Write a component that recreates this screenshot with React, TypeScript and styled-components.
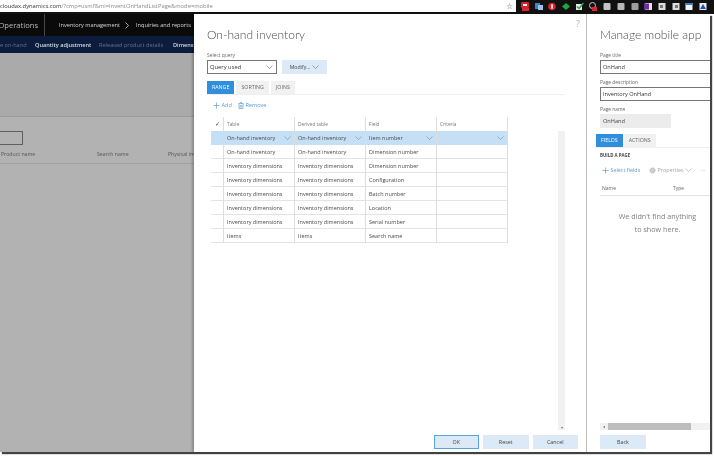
import React from "react";
import styled, { createGlobalStyle } from "styled-components";

const Global = createGlobalStyle`
  html, body { margin: 0; padding: 0; background: #fff; }
  * { box-sizing: border-box; }
  #root { width: 714px; height: 456px; overflow: hidden; font-family: "Open Sans", "Liberation Sans", sans-serif; }
`;

const Shot = styled.div`
  width: 714px; height: 456px; display: flex; flex-direction: column; background: #fff; overflow: hidden; filter: blur(0.3px);
`;
const Chrome = styled.div`
  height: 14px; flex: none; display: flex; align-items: flex-start; border-bottom: 2px solid #111; background: #fff;
`;
const Url = styled.div`
  flex: 1; height: 12px; line-height: 12px; font-size: 5.8px; white-space: nowrap; color: #333; overflow: hidden;
  span { color: #8a8a8a; }
`;
const Star = styled.div`
  width: 14px; text-align: center; font-size: 8px; line-height: 11px; color: #555;
`;
const Tray = styled.div`
  width: 198px; height: 13px; background: #111; display: flex; align-items: center; gap: 5.7px; padding-left: 5px; position: relative; z-index: 1;
`;
const TrayIcon = styled.svg`
  width: 8px; height: 9px; flex: none;
`;
const Workspace = styled.div`
  flex: 1; min-height: 0; display: flex; background: #fff;
`;
const Framed = styled.div`
  width: 710px; height: 438px; flex: none; display: flex; box-shadow: 2px 2px 1px #444;
`;
const Back = styled.div`
  width: 194px; flex: none; display: flex; flex-direction: column; background: #b2b2b2; overflow: hidden;
`;
const TopBar = styled.div`
  height: 22px; flex: none; background: #0a0a0a; color: #d8d8d8; display: flex; align-items: center; white-space: nowrap; font-size: 5.6px;
`;
const Brand = styled.div`
  width: 45px; height: 100%; flex: none; display: flex; justify-content: flex-end; font-size: 7.6px; line-height: 22px; color: #bcbcbc; border-right: 1px solid #4a4a4a; margin-right: 14px; padding-right: 6px;
`;
const CrumbSep = styled.svg`
  width: 4px; height: 7px; flex: none; margin: 0 7px 0 5px; fill: none; stroke: #d8d8d8; stroke-width: 0.8;
`;
const Nav = styled.div`
  height: 17px; flex: none; background: #0b1c3c; display: flex; align-items: center; white-space: nowrap; font-size: 5.6px; gap: 9px;
`;
const NavItem = styled.span<{ $dim?: boolean; $w: number }>`
  width: ${(p) => p.$w}px; flex: none; color: ${(p) => (p.$dim ? "#66738c" : "#d6dbe6")}; font-weight: ${(p) => (p.$dim ? 400 : 600)};
`;
const BackBody = styled.div`
  flex: 1; display: flex; flex-direction: column; padding-top: 63px; background: #aaaaaa;
`;
const Rule = styled.div`
  height: 1px; background: #9c9c9c;
`;
const BackLower = styled.div`
  flex: 1; background: #b2b2b2;
`;
const SearchBox = styled.div`
  width: 23px; height: 14px; margin-top: 14px; border: 1px solid #5f5f5f; border-left: none;
`;
const BackCols = styled.div`
  height: 19px; display: flex; align-items: center; font-size: 5.2px; color: #555; white-space: nowrap; border-bottom: 1px solid #a0a0a0;
`;
const BackCol = styled.span<{ $w: number }>`
  width: ${(p) => p.$w}px; flex: none; padding-left: 1px;
`;
const Dialog = styled.div`
  width: 393px; flex: none; background: #fff; display: flex; flex-direction: column; padding: 11px 0 0 13px; position: relative; border-right: 1px solid #bdbdbd; box-shadow: -2px 0 2px rgba(0, 0, 0, 0.22);
`;
const Help = styled.div`
  position: absolute; right: 6px; top: 3px; font-size: 9px; color: #b5b5b5;
`;
const Title = styled.h1`
  margin: 0; font-family: Lato, "Open Sans", sans-serif; font-weight: 300; font-size: 12px; line-height: 20px; color: #4d4d4d; white-space: nowrap;
`;
const Label = styled.div`
  font-size: 4.9px; line-height: 7px; color: #666;
`;
const QueryLabel = styled(Label)`
  margin-top: 7px;
`;
const QueryRow = styled.div`
  display: flex; gap: 5px; margin-top: 1px;
`;
const Select = styled.div`
  width: 70px; height: 14px; border: 1px solid #777; font-size: 5.8px; line-height: 12px; padding-left: 2px; color: #333; display: flex; justify-content: space-between; align-items: center;
`;
const Chev = styled.svg<{ $c?: string }>`
  width: 7px; height: 4px; flex: none; margin-right: 3px; fill: none; stroke: ${(p) => p.$c ?? "#666"}; stroke-width: 0.6;
`;
const Modify = styled.div`
  width: 45px; height: 14px; background: #dce9f6; font-size: 5.2px; color: #444; display: flex; align-items: center; justify-content: center; gap: 2px;
  svg { margin: 0; }
`;
const Tabs = styled.div`
  display: flex; gap: 2px; height: 14px; margin-top: 7px; width: 358px; border-bottom: 1px solid #efefef;
`;
const Tab = styled.div<{ $on?: boolean }>`
  height: 13px; padding: 0 5px; font-size: 5.3px; line-height: 13px; background: ${(p) => (p.$on ? "#2f8fdc" : "#f1f1f1")}; color: ${(p) => (p.$on ? "#fff" : "#666")};
`;
const Actions = styled.div`
  display: flex; gap: 6px; margin-top: 3.5px; padding-left: 6px; height: 13px; align-items: center; font-size: 5.6px; color: #5b9bd5;
`;
const Action = styled.div`
  display: flex; align-items: center; gap: 1.5px;
`;
const TableWrap = styled.div`
  display: grid; grid-template-columns: 13px 71px 71px 71px 71px; margin: 5.5px 0 0 4px; width: 297px;
`;
const Tick = styled.div`
  height: 14px; border-right: 1px solid #dedede; display: flex; align-items: center; justify-content: center; color: #333; font-size: 6px;
`;
const Head = styled.div`
  height: 14px; border-right: 1px solid #dedede; font-size: 4.8px; line-height: 14px; color: #777; padding-left: 3px;
`;
const Mark = styled.div<{ $on?: boolean }>`
  height: 14px; background: ${(p) => (p.$on ? "#c5dff4" : "#fff")}; border-bottom: 1px solid ${(p) => (p.$on ? "#c5dff4" : "#e3e3e3")}; border-right: 1px solid ${(p) => (p.$on ? "#c5dff4" : "#dedede")};
`;
const Cell = styled.div<{ $on?: boolean }>`
  height: 14px; background: ${(p) => (p.$on ? "#c5dff4" : "#fff")}; border-bottom: 1px solid ${(p) => (p.$on ? "#c5dff4" : "#e3e3e3")}; border-right: 1px solid #dedede; font-size: 5.5px; color: #4a4a4a; padding-left: 3px; display: flex; align-items: center; justify-content: space-between; white-space: nowrap; overflow: hidden;
`;
const Spacer = styled.div`
  flex: 1; min-height: 0;
`;
const ScrollTrack = styled.div`
  position: absolute; right: 21px; top: 117px; bottom: 22px; width: 7px; background: #f1f1f1; display: flex; align-items: flex-end; justify-content: center; font-size: 4px; color: #777;
`;
const Footer = styled.div`
  height: 17px; flex: none; display: flex; justify-content: flex-end; gap: 4px; padding-right: 8px;
`;
const Btn = styled.div<{ $primary?: boolean }>`
  width: 45.5px; height: 14px; background: #dce9f6; border: 1px solid ${(p) => (p.$primary ? "#5aa5e0" : "#dce9f6")}; font-size: 5.4px; line-height: 12px; text-align: center; color: #444;
`;
const Panel = styled.div`
  flex: 1; min-width: 0; background: #fff; display: flex; flex-direction: column; padding: 11px 0 0 13px; overflow: hidden;
`;
const PanelTitle = styled.h2`
  margin: 0; font-family: Lato, "Open Sans", sans-serif; font-weight: 300; font-size: 12px; line-height: 20px; color: #4d4d4d; white-space: nowrap;
`;
const PanelLabel = styled(Label)`
  margin-top: 4.5px;
  &:first-of-type { margin-top: 6.5px; }
`;
const Input = styled.div`
  height: 14px; margin-top: 1.5px; border: 1px solid #777; border-right: none; font-size: 5.6px; line-height: 12px; padding-left: 2px; color: #333; white-space: nowrap;
`;
const ReadOnly = styled.div`
  width: 71px; height: 14px; margin-top: 1.5px; background: #ececec; font-size: 5.6px; line-height: 14px; padding-left: 3px; color: #444;
`;
const PanelTabs = styled.div`
  display: flex; gap: 1px; height: 14px; margin: 6px 0 0 -4px; border-bottom: 1px solid #efefef;
`;
const Build = styled.div`
  font-size: 4.4px; font-weight: 700; color: #444; margin: 4px 0 0 0; line-height: 7px;
`;
const PanelActions = styled.div`
  display: flex; align-items: center; margin: 6px 0 0 2px; height: 10px; font-size: 5.4px; color: #5b9bd5; white-space: nowrap;
`;
const SelectFields = styled(Action)`
  width: 47px; flex: none;
`;
const Muted = styled.span`
  color: #a5a5a5; display: flex; align-items: center; gap: 1.5px; width: 52px; flex: none;
`;
const Dots = styled.span`
  color: #a5a5a5;
`;
const Cols = styled.div`
  display: flex; height: 15px; margin-top: 5.5px; font-size: 5px; color: #666; align-items: center; border-bottom: 1px solid #e3e3e3;
`;
const ColName = styled.span<{ $w: number }>`
  width: ${(p) => p.$w}px; flex: none; padding-left: 2px;
`;
const Empty = styled.div`
  margin-top: 14px; padding-left: 5px; text-align: center; font-size: 7.2px; line-height: 13.5px; color: #808080; white-space: nowrap;
`;
const PanelSpacer = styled.div`
  flex: 1;
`;
const HScroll = styled.div`
  height: 7px; display: flex; align-items: stretch; background: #f1f1f1; font-size: 4px; color: #666;
`;
const HArrow = styled.div`
  width: 8px; text-align: center; line-height: 7px;
`;
const HThumb = styled.div`
  width: 83px; background: #bdbdbd;
`;
const BackBtn = styled(Btn)`
  width: 46px; flex: none; margin: 5px 0 3px 0;
`;

const Chevron = ({ c }: { c?: string }) => (
  <Chev $c={c} viewBox="0 0 7 4"><path d="M0.5 0.5 L3.5 3.5 L6.5 0.5" /></Chev>
);
const Plus = () => (
  <svg width="7" height="7" viewBox="0 0 7 7" fill="none" stroke="#5b9bd5" strokeWidth="0.7"><path d="M3.5 0.5V6.5M0.5 3.5H6.5" /></svg>
);
const Trash = () => (
  <svg width="6" height="7" viewBox="0 0 6 7" fill="none" stroke="#5b9bd5" strokeWidth="0.7"><path d="M0.5 1.5H5.5M1 1.5V6.5H5V1.5M2 0.5H4M2.3 3V5.5M3.7 3V5.5" /></svg>
);
const Gear = () => (
  <svg width="7" height="7" viewBox="0 0 7 7"><circle cx="3.5" cy="3.5" r="2.5" fill="#d0d0d0" stroke="#b0b0b0" strokeWidth="1" strokeDasharray="1 .5" /></svg>
);

const rows = [
  ["On-hand inventory", "On-hand inventory", "Item number"],
  ["On-hand inventory", "On-hand inventory", "Dimension number"],
  ["Inventory dimensions", "Inventory dimensions", "Dimension number"],
  ["Inventory dimensions", "Inventory dimensions", "Configuration"],
  ["Inventory dimensions", "Inventory dimensions", "Batch number"],
  ["Inventory dimensions", "Inventory dimensions", "Location"],
  ["Inventory dimensions", "Inventory dimensions", "Serial number"],
  ["Items", "Items", "Search name"],
];

const trayIcons: React.ReactNode[] = [
  <><rect x="0" y="0" width="8" height="6" rx="1" fill="#d8222a" /><rect x="2" y="2" width="4" height="2" fill="#fff" /><rect x="1" y="6" width="7" height="3" fill="#e0242c" /></>,
  <><rect x="0" y="1" width="5" height="6" fill="#3d7fd0" /><rect x="3" y="3" width="5" height="5" fill="#9ec3ea" /></>,
  <><circle cx="4" cy="4.5" r="3.8" fill="#d8222a" /><rect x="3" y="2" width="2" height="5" rx="1" fill="#f3d6d6" /></>,
  <path d="M4 1 L8 4.5 L4 8 L0 4.5 Z" fill="#1fa83a" />,
  <><rect x="0" y="2" width="6" height="6" fill="#e8e8e8" /><path d="M1 4.5 L3 6.5 L7.5 1" fill="none" stroke="#1fa83a" strokeWidth="1.5" /></>,
  <><circle cx="3.5" cy="3.5" r="3" fill="none" stroke="#ccc" strokeWidth="1" /><rect x="3" y="5" width="5" height="4" fill="#e0242c" /></>,
  <rect x="0.5" y="1" width="7" height="7" rx="1" fill="#c4c4c4" />,
  <rect x="0.5" y="1" width="7" height="7" rx="1" fill="#b8b8b8" />,
  <rect x="0.5" y="1" width="7" height="7" rx="1" fill="#9c9c9c" />,
  <><rect x="1" y="1" width="7" height="7" fill="#e6e0ee" /><rect x="0" y="1.5" width="5" height="6" fill="#6b2fa0" /></>,
  <><rect x="0.5" y="1" width="7" height="7" fill="#dcdcdc" /><rect x="2" y="3" width="3" height="3" fill="#777" /></>,
  <><rect x="0.5" y="1" width="7" height="7" fill="#dcdcdc" /><rect x="3" y="3" width="3" height="3" fill="#777" /></>,
  <><rect x="0.5" y="1" width="7" height="7" fill="#eef4fb" /><rect x="0.5" y="1" width="7" height="2" fill="#3d7fd0" /></>,
  <><rect x="0.5" y="1" width="7" height="7" fill="#e8eefa" /><path d="M1 7 L4 2 L7 7 Z" fill="#2a4fb0" /></>,
];

export default function App() {
  return (
    <Shot>
      <Global />
      <Chrome>
        <Url>cloudax.dynamics.com<span>/?cmp=usmf&amp;mi=InventOnHandListPage&amp;mode=mobile</span></Url>
        <Star>☆</Star>
        <Tray>{trayIcons.map((c, i) => <TrayIcon key={i} viewBox="0 0 8 9">{c}</TrayIcon>)}</Tray>
      </Chrome>
      <Workspace>
        <Framed>
          <Back>
            <TopBar>
              <Brand>Operations</Brand>
              <span>Inventory management</span>
              <CrumbSep viewBox="0 0 4 7"><path d="M0.5 0.5 L3.5 3.5 L0.5 6.5" /></CrumbSep>
              <span>Inquiries and reports</span>
            </TopBar>
            <Nav>
              <NavItem $w={26} $dim>e on-hand</NavItem>
              <NavItem $w={55}>Quantity adjustment</NavItem>
              <NavItem $w={65} $dim>Released product details</NavItem>
              <NavItem $w={30}>Dimensions</NavItem>
            </Nav>
            <BackBody>
              <Rule />
              <BackLower>
                <SearchBox />
                <BackCols>
                  <BackCol $w={96}>Product name</BackCol>
                  <BackCol $w={71}>Search name</BackCol>
                  <BackCol $w={30}>Physical inventory</BackCol>
                </BackCols>
              </BackLower>
            </BackBody>
          </Back>
          <Dialog>
            <Help>?</Help>
            <Title>On-hand inventory</Title>
            <QueryLabel>Select query</QueryLabel>
            <QueryRow>
              <Select>Query used<Chevron /></Select>
              <Modify>Modify... <Chevron /></Modify>
            </QueryRow>
            <Tabs>
              <Tab $on>RANGE</Tab>
              <Tab>SORTING</Tab>
              <Tab>JOINS</Tab>
            </Tabs>
            <Actions>
              <Action><Plus />Add</Action>
              <Action><Trash />Remove</Action>
            </Actions>
            <TableWrap>
              <Tick>✓</Tick>
              <Head>Table</Head>
              <Head>Derived table</Head>
              <Head>Field</Head>
              <Head>Criteria</Head>
              {rows.map((r, i) => (
                <React.Fragment key={i}>
                  <Mark $on={i === 0} />
                  {r.map((t, j) => (
                    <Cell key={j} $on={i === 0}>{t}{i === 0 && <Chevron c="#6f8fa8" />}</Cell>
                  ))}
                  <Cell $on={i === 0}>{i === 0 && <span />}{i === 0 && <Chevron c="#6f8fa8" />}</Cell>
                </React.Fragment>
              ))}
            </TableWrap>
            <Spacer />
            <ScrollTrack>▾</ScrollTrack>
            <Footer>
              <Btn $primary>OK</Btn>
              <Btn>Reset</Btn>
              <Btn>Cancel</Btn>
            </Footer>
          </Dialog>
          <Panel>
            <PanelTitle>Manage mobile app</PanelTitle>
            <PanelLabel>Page title</PanelLabel>
            <Input>OnHand</Input>
            <PanelLabel>Page description</PanelLabel>
            <Input>Inventory OnHand</Input>
            <PanelLabel>Page name</PanelLabel>
            <ReadOnly>OnHand</ReadOnly>
            <PanelTabs>
              <Tab $on>FIELDS</Tab>
              <Tab>ACTIONS</Tab>
            </PanelTabs>
            <Build>BUILD A PAGE</Build>
            <PanelActions>
              <SelectFields><Plus />Select fields</SelectFields>
              <Muted><Gear />Properties <Chevron c="#a5a5a5" /></Muted>
              <Dots>···</Dots>
            </PanelActions>
            <Cols>
              <ColName $w={71}>Name</ColName>
              <ColName $w={30}>Type</ColName>
            </Cols>
            <Empty>We didn't find anything<br />to show here.</Empty>
            <PanelSpacer />
            <HScroll>
              <HArrow>◂</HArrow>
              <HThumb />
            </HScroll>
            <BackBtn>Back</BackBtn>
          </Panel>
        </Framed>
      </Workspace>
    </Shot>
  );
}
